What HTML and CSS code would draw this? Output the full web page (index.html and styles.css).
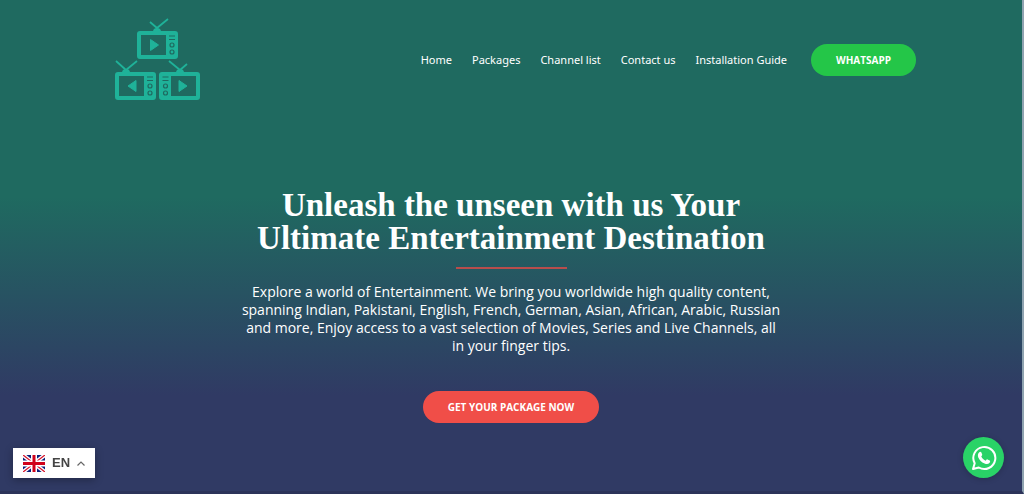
FILE: index.html
```html
<!DOCTYPE html>
<html lang="en">
<head>
  <meta charset="UTF-8">
  <meta name="viewport" content="width=device-width, initial-scale=1.0">
  <title>Your Ultimate Entertainment Destination</title>
  <link rel="stylesheet" href="styles.css">
</head>
<body>
  <header class="site-header">
    <a href="#home" class="logo" aria-label="Home page">
      <svg width="86" height="83" viewBox="0 0 86 83" fill="none" stroke="#1fb299">
        <!-- top tv -->
        <rect x="24" y="15" width="37" height="24" rx="1" stroke-width="4"/>
        <rect x="51" y="15" width="10" height="24" fill="#1fb299" stroke="none"/>
        <path d="M54 18h6M54 21.500h6" stroke="#1f6a60" stroke-width="1.200"/>
        <circle cx="57" cy="27" r="2" stroke="#1f6a60" stroke-width="1.200"/>
        <circle cx="57" cy="34" r="2" stroke="#1f6a60" stroke-width="1.200"/>
        <path d="M35.500 21.500v11l8-5.500z" fill="#1fb299" stroke-linejoin="round"/>
        <path d="M35 4l7 6L53 1" stroke-width="1.800"/>
        <path d="M38 14q0-4 4-4t4 4z" fill="#1fb299" stroke="none"/>
        <!-- left tv -->
        <rect x="2" y="56" width="37" height="24" rx="1" stroke-width="4"/>
        <rect x="29" y="56" width="10" height="24" fill="#1fb299" stroke="none"/>
        <path d="M32 59h6M32 62.500h6" stroke="#1f6a60" stroke-width="1.200"/>
        <circle cx="35" cy="68" r="2" stroke="#1f6a60" stroke-width="1.200"/>
        <circle cx="35" cy="75" r="2" stroke="#1f6a60" stroke-width="1.200"/>
        <path d="M21 62.500v11L13 68z" fill="#1fb299" stroke-linejoin="round"/>
        <path d="M1 43l10 9 11-9" stroke-width="1.800"/>
        <path d="M7 55q0-4 4-4t4 4z" fill="#1fb299" stroke="none"/>
        <!-- right tv -->
        <rect x="46" y="56" width="37" height="24" rx="1" stroke-width="4"/>
        <rect x="47" y="56" width="9" height="24" fill="#1fb299" stroke="none"/>
        <path d="M47.500 59h6M47.500 62.500h6" stroke="#1f6a60" stroke-width="1.200"/>
        <circle cx="50.500" cy="68" r="2" stroke="#1f6a60" stroke-width="1.200"/>
        <circle cx="50.500" cy="75" r="2" stroke="#1f6a60" stroke-width="1.200"/>
        <path d="M64 62.500v11l8-5.500z" fill="#1fb299" stroke-linejoin="round"/>
        <path d="M54 43l11 9 7-6" stroke-width="1.800"/>
        <path d="M61 55q0-4 4-4t4 4z" fill="#1fb299" stroke="none"/>
      </svg>
    </a>
    <nav class="main-nav">
      <a href="#home">Home</a>
      <a href="#packages">Packages</a>
      <a href="#channels">Channel list</a>
      <a href="#contact">Contact us</a>
      <a href="#guide">Installation Guide</a>
      <a href="#whatsapp" class="btn btn-green">WHATSAPP</a>
    </nav>
  </header>

  <main id="home" class="hero">
    <h1>Unleash the unseen with us Your Ultimate Entertainment Destination</h1>
    <hr class="divider">
    <p>
      Explore a world of Entertainment. We bring you worldwide high quality content,<br>
      spanning Indian, Pakistani, English, French, German, Asian, African, Arabic, Russian<br>
      and more, Enjoy access to a vast selection of Movies, Series and Live Channels, all<br>
      in your finger tips.
    </p>
    <a href="#packages" class="btn btn-red">GET YOUR PACKAGE NOW</a>
  </main>

  <button type="button" class="lang-switch">
    <svg width="22" height="17" viewBox="0 0 22 17">
      <rect width="22" height="17" fill="#0b1f7c"/>
      <path d="M0 0l22 17M22 0L0 17" stroke="#fff" stroke-width="4"/>
      <path d="M0 0l22 17M22 0L0 17" stroke="#d8142c" stroke-width="1.300"/>
      <path d="M11 0v17M0 8.500h22" stroke="#fff" stroke-width="6"/>
      <path d="M11 0v17M0 8.500h22" stroke="#d0021b" stroke-width="3"/>
    </svg>
    <span>EN</span>
    <svg width="8" height="5" viewBox="0 0 8 5" fill="none" stroke="#666" stroke-width="1.200">
      <path d="M.5 4.500L4 1l3.500 3.500"/>
    </svg>
  </button>

  <a href="#whatsapp" class="chat" aria-label="Chat on WhatsApp">
    <svg width="26" height="26" viewBox="0 0 26 26">
      <path d="M2 24l1.700-5.700A11 11 0 1 1 7.800 22.500z" fill="none" stroke="#fff" stroke-width="2" stroke-linejoin="round"/>
      <path d="M8.300 7.300c.8-.8 1.700-.7 2.100.2l.8 2c.2.500-.1.900-.9 1.900 1 2 2.400 3.400 4.500 4.300.8-1 1.200-1.500 1.700-1.300l2.200 1.100c.7.400.5 1.700-.3 2.500-1.200 1.100-2.900 1.200-4.800.4-3.200-1.300-5.200-3.400-6.300-6-.8-1.900-.4-3.900 1-5.100z" fill="#fff"/>
    </svg>
  </a>
</body>
</html>
```
FILE: styles.css
```css
* {
  box-sizing: border-box;
  margin: 0;
  padding: 0;
}

body {
  font-family: "Noto Sans", sans-serif;
  color: #fff;
  min-height: 100vh;
  background: linear-gradient(#1f6a60 40%, #303a64 80%);
  border-right: 2px solid #8fa3b0;
  border-bottom: 3px solid #2c3359;
}

a {
  color: inherit;
  text-decoration: none;
}

.site-header {
  display: flex;
  justify-content: space-between;
  align-items: center;
  max-width: 810px;
  margin: 0 auto;
  padding: 18px 0 0 9px;
}

.logo svg {
  display: block;
}

.main-nav {
  display: flex;
  align-items: center;
  gap: 20px;
  font-size: 11px;
}

.btn {
  display: inline-block;
  border-radius: 16px;
  font-family: "Open Sans", sans-serif;
  font-size: 10px;
  font-weight: bold;
  line-height: 32px;
  padding: 0 25px;
}

.btn-green {
  background: #24c648;
  margin-left: 4px;
}

.btn-red {
  background: #f04e48;
}

.hero {
  max-width: 548px;
  margin: 0 auto;
  padding-top: 88px;
  text-align: center;
}

.hero h1 {
  font-family: Georgia, "Liberation Serif", serif;
  font-size: 33px;
  line-height: 33px;
}

.divider {
  width: 111px;
  margin: 12px auto 14px;
  border: 0;
  border-top: 2px solid #b84d4c;
}

.hero p {
  font-family: "Open Sans", sans-serif;
  font-size: 14px;
  line-height: 18px;
  margin-bottom: 36px;
}

.lang-switch {
  position: fixed;
  left: 13px;
  bottom: 16px;
  display: flex;
  align-items: center;
  gap: 7px;
  padding: 6px 10px;
  border: 0;
  background: #fff;
  color: #444;
  font: bold 13px/18px "Liberation Sans", sans-serif;
  box-shadow: 0 2px 8px rgba(0, 0, 0, 0.3);
  cursor: pointer;
}

.chat {
  position: fixed;
  right: 20px;
  bottom: 16px;
  display: flex;
  justify-content: center;
  align-items: center;
  width: 41px;
  height: 41px;
  border-radius: 50%;
  background: #29d367;
  box-shadow: 0 1px 6px rgba(0, 0, 0, 0.2);
}
```
